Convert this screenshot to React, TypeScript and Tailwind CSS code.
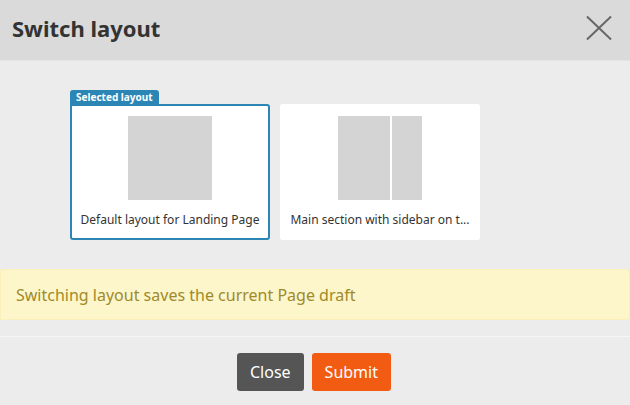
import React, { useState } from 'react';

const layouts = [
    { id: 'default', name: 'Default layout for Landing Page', kind: 'single' },
    { id: 'sidebar', name: 'Main section with sidebar on t...', kind: 'sidebar' },
];

const App = () => {
    const [selected, setSelected] = useState('default');

    return (
        <div className="w-[630px] h-[405px] bg-[#ececec] text-[#333] font-['Noto_Sans',sans-serif] flex flex-col">
            {/* Header */}
            <div className="h-[61px] bg-[#dadada] border-b border-[#e4e4e4] flex items-center justify-between pl-3 pr-[18px] shrink-0">
                <h1 className="text-[22px] font-bold text-[#333] leading-none -mt-[4px]">Switch layout</h1>
                <button className="w-[26px] h-[26px] flex items-center justify-center -mt-[4px]">
                    <svg width="27" height="26" viewBox="0 0 27 26" fill="none" stroke="#666" strokeWidth="2">
                        <path d="M1 1 L26 25 M26 1 L1 25" />
                    </svg>
                </button>
            </div>

            {/* Layout cards */}
            <div className="flex gap-[10px] pl-[70px] pt-[43px] h-[208px] shrink-0">
                {layouts.map((l) => {
                    const active = selected === l.id;
                    return (
                        <div key={l.id} className="relative" onClick={() => setSelected(l.id)}>
                            {active && (
                                <div className="absolute -top-[14px] left-0 h-[15px] px-[6px] bg-[#2b86b5] rounded-t-[3px] text-white text-[10px] font-bold leading-[15px]">
                                    Selected layout
                                </div>
                            )}
                            <div className={`w-[200px] h-[136px] bg-white rounded-[3px] flex flex-col items-center pt-[10px] ${active ? 'border-2 border-[#2b86b5] rounded-tl-none' : 'border-2 border-white'}`}>
                                {l.kind === 'single' ? (
                                    <div className="w-[84px] h-[84px] bg-[#d4d4d4]" />
                                ) : (
                                    <div className="flex gap-[2px]">
                                        <div className="w-[52px] h-[84px] bg-[#d4d4d4]" />
                                        <div className="w-[30px] h-[84px] bg-[#d4d4d4]" />
                                    </div>
                                )}
                                <div className="text-[12px] text-[#333] mt-[12px] leading-4">{l.name}</div>
                            </div>
                        </div>
                    );
                })}
            </div>

            {/* Warning */}
            <div className="h-[51px] bg-[#fdf6cb] border border-[#fbf0bc] rounded-r-[4px] flex items-center pl-[15px] text-[16px] text-[#9f8a2a] shrink-0">
                Switching layout saves the current Page draft
            </div>

            {/* Footer */}
            <div className="mt-[16px] border-t border-[#f5f5f5] flex justify-center gap-2 pt-4 pr-[2px]">
                <button className="h-[38px] px-[13px] bg-[#555] text-white text-[16px] rounded-[3px]">Close</button>
                <button className="h-[38px] px-[13px] bg-[#f25b12] text-white text-[16px] rounded-[3px]">Submit</button>
            </div>
        </div>
    );
};

export default App;
